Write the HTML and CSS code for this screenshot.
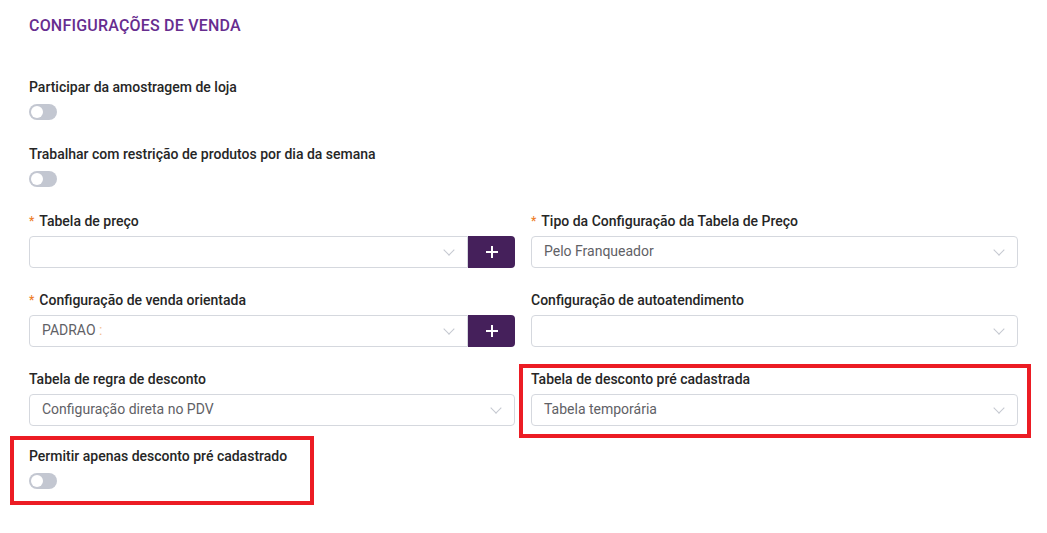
FILE: index.html
```html
<!DOCTYPE html>
<html lang="pt-BR">
<head>
    <meta charset="UTF-8">
    <meta name="viewport" content="width=device-width, initial-scale=1.0">
    <title>Configurações de venda</title>
    <link rel="stylesheet" href="styles.css">
</head>
<body>
    <div class="page">
        <h2 class="section-title">CONFIGURAÇÕES DE VENDA</h2>

        <div class="switch-field">
            <label class="field-label">Participar da amostragem de loja</label>
            <span class="switch"></span>
        </div>

        <div class="switch-field">
            <label class="field-label">Trabalhar com restrição de produtos por dia da semana</label>
            <span class="switch"></span>
        </div>

        <div class="form-grid">
            <div class="field">
                <label class="field-label"><span class="req">*</span>Tabela de preço</label>
                <div class="select-group">
                    <div class="select"><span class="select-value"></span><span class="chevron"></span></div>
                    <button class="add-btn"><svg width="12" height="12" viewBox="0 0 12 12"><path d="M6 0v12M0 6h12" stroke="#fff" stroke-width="2"/></svg></button>
                </div>
            </div>
            <div class="field">
                <label class="field-label"><span class="req">*</span>Tipo da Configuração da Tabela de Preço</label>
                <div class="select"><span class="select-value">Pelo Franqueador</span><span class="chevron"></span></div>
            </div>

            <div class="field">
                <label class="field-label"><span class="req">*</span>Configuração de venda orientada</label>
                <div class="select-group">
                    <div class="select"><span class="select-value">PADRAO <span class="muted">:</span></span><span class="chevron"></span></div>
                    <button class="add-btn"><svg width="12" height="12" viewBox="0 0 12 12"><path d="M6 0v12M0 6h12" stroke="#fff" stroke-width="2"/></svg></button>
                </div>
            </div>
            <div class="field">
                <label class="field-label">Configuração de autoatendimento</label>
                <div class="select"><span class="select-value"></span><span class="chevron"></span></div>
            </div>

            <div class="field">
                <label class="field-label">Tabela de regra de desconto</label>
                <div class="select"><span class="select-value">Configuração direta no PDV</span><span class="chevron"></span></div>
            </div>
            <div class="field highlight highlight-right">
                <label class="field-label">Tabela de desconto pré cadastrada</label>
                <div class="select"><span class="select-value">Tabela temporária</span><span class="chevron"></span></div>
            </div>

            <div class="switch-field highlight highlight-left">
                <label class="field-label">Permitir apenas desconto pré cadastrado</label>
                <span class="switch"></span>
            </div>
        </div>
    </div>
</body>
</html>
```

FILE: styles.css
```css
body {
    font-family: Roboto, "Liberation Sans", Arial, sans-serif;
    background-color: #fff;
    margin: 0;
    padding: 0;
    color: #2b2b2b;
}
.page {
    padding: 14px 29px 40px 29px;
}
.section-title {
    margin: 0 0 38px 0;
    font-size: 16px;
    line-height: 24px;
    font-weight: 500;
    letter-spacing: 0.2px;
    color: #672d8f;
}
.field-label {
    display: block;
    height: 22px;
    font-size: 14px;
    line-height: 22px;
    font-weight: 500;
    color: #262626;
    margin-bottom: 4px;
}
.req {
    color: #ee7d2a;
    font-size: 12px;
    line-height: 0;
    margin-right: 5px;
    position: relative;
    top: -1px;
}
.switch-field {
    margin-bottom: 23px;
}
.switch-field .field-label {
    margin-bottom: 6px;
}
.switch {
    display: block;
    position: relative;
    width: 28px;
    height: 16px;
    border-radius: 8px;
    background-color: #c3c7d1;
}
.switch::after {
    content: "";
    position: absolute;
    left: 2px;
    top: 2px;
    width: 12px;
    height: 12px;
    border-radius: 50%;
    background-color: #fff;
}
.form-grid {
    display: grid;
    grid-template-columns: 486px 487px;
    column-gap: 16px;
    row-gap: 21px;
}
.form-grid .switch-field {
    margin: -2px 0 0 0;
}
.select-group {
    display: flex;
}
.select {
    flex: 1;
    display: flex;
    align-items: center;
    justify-content: space-between;
    height: 30px;
    padding: 0 14px 0 12px;
    border: 1px solid #d5d8de;
    border-radius: 4px;
    background-color: #fff;
    font-size: 14px;
    color: #5f6166;
}
.select-group .select {
    border-radius: 4px 0 0 4px;
}
.select-value {
    position: relative;
    top: -1px;
}
.muted {
    color: #f3c08f;
}
.chevron {
    width: 7px;
    height: 7px;
    border-right: 1px solid #c5c8d0;
    border-bottom: 1px solid #c5c8d0;
    transform: rotate(45deg);
    margin-top: -5px;
}
.add-btn {
    width: 47px;
    height: 32px;
    border: none;
    border-radius: 0 4px 4px 0;
    background-color: #45205b;
    display: flex;
    align-items: center;
    justify-content: center;
    padding: 0;
}
.highlight {
    position: relative;
}
.highlight::before {
    content: "";
    position: absolute;
    border: 4px solid #ec1c24;
    pointer-events: none;
}
.highlight-right::before {
    left: -12px;
    top: -4px;
    right: -13px;
    bottom: -12px;
}
.highlight-left::before {
    left: -19px;
    top: -9px;
    width: 296px;
    bottom: -16px;
}
```
